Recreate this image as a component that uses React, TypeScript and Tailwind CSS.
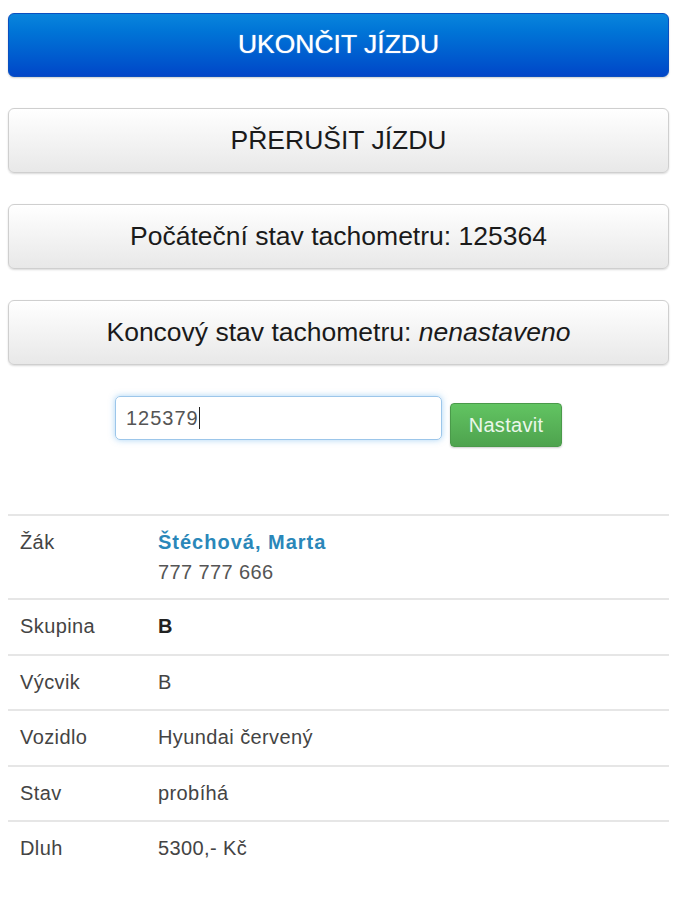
import React from "react";

const rows: { label: string; value: React.ReactNode }[] = [
  {
    label: "Skupina",
    value: <span className="font-bold text-[#222]">B</span>,
  },
  { label: "Výcvik", value: "B" },
  { label: "Vozidlo", value: "Hyundai červený" },
  { label: "Stav", value: "probíhá" },
  { label: "Dluh", value: "5300,- Kč" },
];

export default function App() {
  const btn =
    "w-full h-[65px] rounded-[6px] border border-[#cfcfcf] bg-gradient-to-b from-[#ffffff] to-[#e8e8e8] shadow-[0_1px_2px_rgba(0,0,0,0.15)] flex items-center justify-center text-[26.5px] text-[#1a1a1a]";
  return (
    <div
      className="w-[694px] h-[900px] bg-white"
      style={{ fontFamily: '"Liberation Sans", Arial, sans-serif' }}
    >
      <div className="px-[8px] pt-[13px] w-[677px] flex flex-col gap-[31px]">
        <div className="w-full h-[64px] rounded-[6px] border border-[#0a4fc0] bg-gradient-to-b from-[#0b85dc] to-[#0346c8] shadow-[0_1px_2px_rgba(0,0,0,0.2)] flex items-center justify-center text-[26.5px] text-white [text-shadow:0_0_1px_rgba(255,255,255,0.8)]">
          UKONČIT JÍZDU
        </div>
        <div className={btn}>PŘERUŠIT JÍZDU</div>
        <div className={btn}>Počáteční stav tachometru: 125364</div>
        <div className={btn}>
          Koncový stav tachometru:&nbsp;<i>nenastaveno</i>
        </div>
      </div>

      <div className="mt-[31px] flex justify-center gap-[8px] w-[677px]">
        <div className="w-[327px] h-[44px] rounded-[5px] border border-[#9cc6ea] shadow-[0_0_6px_rgba(82,168,236,0.5)] flex items-center px-[10px] text-[20px] tracking-[1px] text-[#555]">
          125379<span className="inline-block w-px h-[22px] bg-[#222]" />
        </div>
        <div className="mt-[7px] w-[112px] h-[44px] rounded-[4px] border border-[#4a9a4a] bg-gradient-to-b from-[#62c462] to-[#4ea34e] shadow-[0_1px_2px_rgba(0,0,0,0.2)] flex items-center justify-center text-[20px] tracking-[0.3px] text-[#eaf7ea]">
          Nastavit
        </div>
      </div>

      <div className="mt-[67px] mx-[8px] w-[661px] text-[20px] tracking-[0.4px] text-[#333]">
        <div className="border-t-2 border-[#e6e6e6] flex pt-[11px] pb-[11px] leading-[30px]">
          <div className="w-[150px] pl-[12px] text-[#444]">Žák</div>
          <div className="flex flex-col">
            <span className="font-bold tracking-[1px] text-[#2a87b9]">Štéchová, Marta</span>
            <span className="text-[#555]">777 777 666</span>
          </div>
        </div>
        {rows.map((r) => (
          <div
            key={r.label}
            className="border-t-2 border-[#e6e6e6] flex py-[13px] leading-[27.5px]"
          >
            <div className="w-[150px] pl-[12px] text-[#444]">{r.label}</div>
            <div className="text-[#444]">{r.value}</div>
          </div>
        ))}
      </div>
    </div>
  );
}
